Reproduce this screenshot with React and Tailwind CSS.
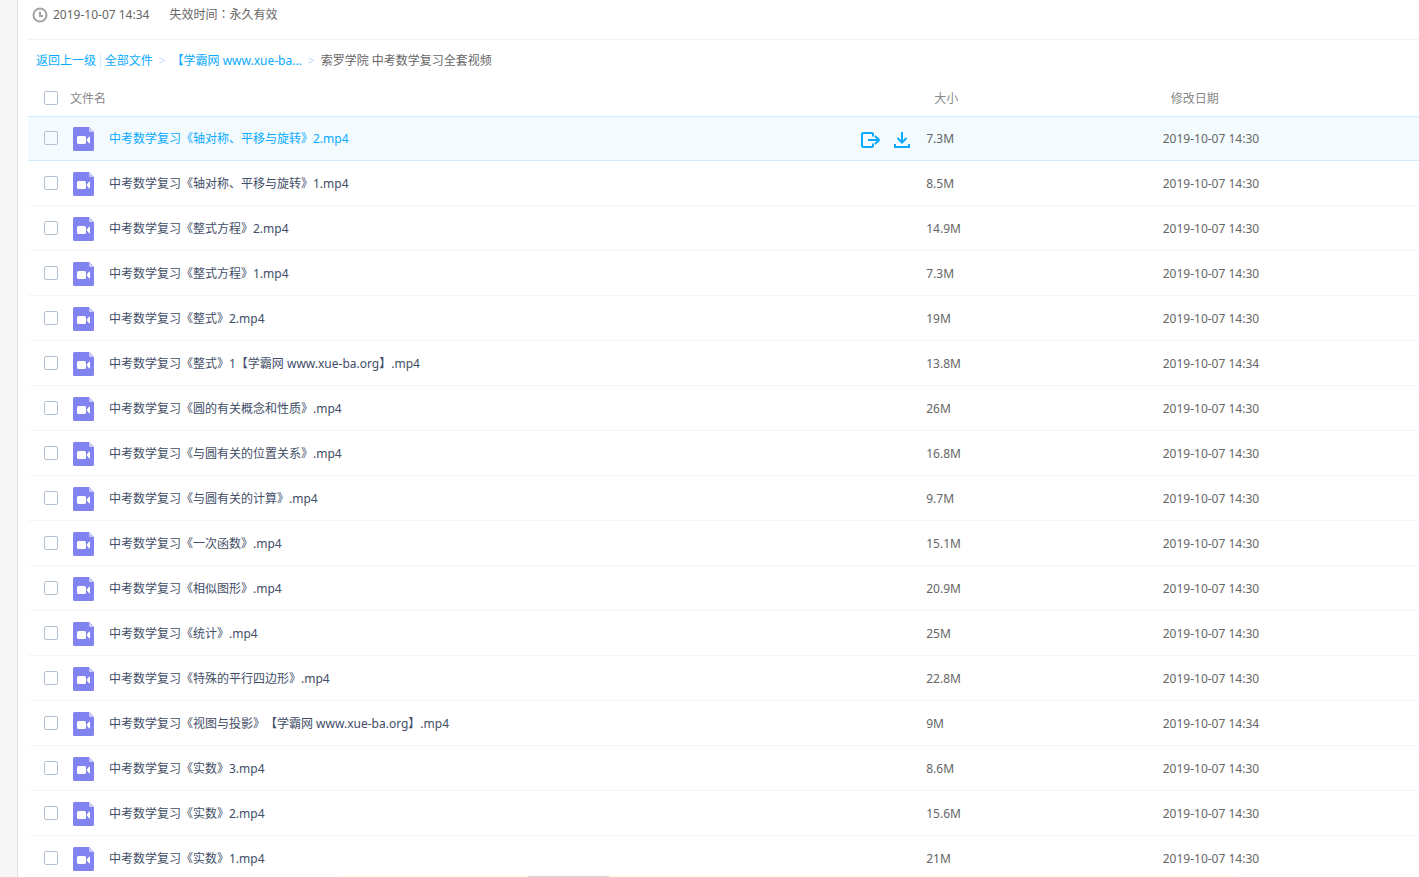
import React, { useState } from 'react';

const initialFiles = [
  { name: '中考数学复习《轴对称、平移与旋转》2.mp4', size: '7.3M', date: '2019-10-07 14:30' },
  { name: '中考数学复习《轴对称、平移与旋转》1.mp4', size: '8.5M', date: '2019-10-07 14:30' },
  { name: '中考数学复习《整式方程》2.mp4', size: '14.9M', date: '2019-10-07 14:30' },
  { name: '中考数学复习《整式方程》1.mp4', size: '7.3M', date: '2019-10-07 14:30' },
  { name: '中考数学复习《整式》2.mp4', size: '19M', date: '2019-10-07 14:30' },
  { name: '中考数学复习《整式》1【学霸网 www.xue-ba.org】.mp4', size: '13.8M', date: '2019-10-07 14:34' },
  { name: '中考数学复习《圆的有关概念和性质》.mp4', size: '26M', date: '2019-10-07 14:30' },
  { name: '中考数学复习《与圆有关的位置关系》.mp4', size: '16.8M', date: '2019-10-07 14:30' },
  { name: '中考数学复习《与圆有关的计算》.mp4', size: '9.7M', date: '2019-10-07 14:30' },
  { name: '中考数学复习《一次函数》.mp4', size: '15.1M', date: '2019-10-07 14:30' },
  { name: '中考数学复习《相似图形》.mp4', size: '20.9M', date: '2019-10-07 14:30' },
  { name: '中考数学复习《统计》.mp4', size: '25M', date: '2019-10-07 14:30' },
  { name: '中考数学复习《特殊的平行四边形》.mp4', size: '22.8M', date: '2019-10-07 14:30' },
  { name: '中考数学复习《视图与投影》【学霸网 www.xue-ba.org】.mp4', size: '9M', date: '2019-10-07 14:34' },
  { name: '中考数学复习《实数》3.mp4', size: '8.6M', date: '2019-10-07 14:30' },
  { name: '中考数学复习《实数》2.mp4', size: '15.6M', date: '2019-10-07 14:30' },
  { name: '中考数学复习《实数》1.mp4', size: '21M', date: '2019-10-07 14:30' },
];

function ClockIcon() {
  return (
    <svg className="size-4 shrink-0" viewBox="0 0 16 16" fill="none" stroke="#a3a3a3" strokeWidth="2" aria-hidden="true">
      <circle cx="8" cy="8" r="6.5" />
      <path d="M8 4.5V9h3" />
    </svg>
  );
}

function VideoFileIcon() {
  return (
    <svg className="h-6 w-[21px] shrink-0" viewBox="0 0 21 24" aria-hidden="true">
      <path d="M1.5 0H16l5 5v17.5a1.5 1.5 0 0 1-1.5 1.5h-18A1.5 1.5 0 0 1 0 22.5v-21A1.5 1.5 0 0 1 1.5 0z" fill="#8183f1" />
      <path d="M16 0l5 5h-4a1 1 0 0 1-1-1z" fill="#c9caf9" />
      <rect x="4" y="9" width="9" height="8" rx="1.5" fill="#fff" />
      <path d="M13.5 13l2.5-3.2q1-.9 1 .4v5.600q0 1.300-1 .4z" fill="#fff" />
    </svg>
  );
}

function SaveIcon() {
  return (
    <svg className="h-4 w-[19px]" viewBox="0 0 19 16" fill="none" stroke="currentColor" strokeWidth="2" aria-hidden="true">
      <path d="M12 4.5V2l-1-1H2L1 2v12l1 1h9l1-1v-2.500" />
      <path d="M7 8h10.500M14 4l4 4-4 4" />
    </svg>
  );
}

function DownloadIcon() {
  return (
    <svg className="size-4" viewBox="0 0 16 16" fill="none" stroke="currentColor" strokeWidth="2" aria-hidden="true">
      <path d="M8 0v10M3.500 6L8 10.500 12.500 6M1 12v3h14v-3" />
    </svg>
  );
}

function CheckBox({ label, checked, onChange }) {
  return (
    <input
      type="checkbox"
      aria-label={label}
      checked={checked}
      onChange={onChange}
      className="mb-0.5 size-3.5 shrink-0 appearance-none rounded-xs border border-[#b4c1d0] checked:border-[#09aaff] checked:bg-[#09aaff]"
    />
  );
}

function FileRow({ file, active, checked, onToggle }) {
  const cell = active ? 'border-y border-[#cdeaff] bg-[#f3fbff] p-0' : 'border-b border-[#f2f6fd] p-0 pt-0.5';

  return (
    <tr className="h-[45px]">
      <td className={cell}>
        <div className="flex items-center pl-4">
          <CheckBox label={file.name} checked={checked} onChange={onToggle} />
          <span className="ml-[15px] flex">
            <VideoFileIcon />
          </span>
          <a href="#file" className={active ? 'ml-[15px] text-[#09aaff]' : 'ml-[15px] text-[#424e67]'}>
            {file.name}
          </a>
          {active && (
            <div className="mt-0.5 mr-2 ml-auto flex items-center gap-3.5 text-[#09aaff]">
              <button type="button" aria-label="保存到网盘">
                <SaveIcon />
              </button>
              <button type="button" aria-label="下载">
                <DownloadIcon />
              </button>
            </div>
          )}
        </div>
      </td>
      <td className={cell}>
        <span className="pl-2">{file.size}</span>
      </td>
      <td className={cell}>
        <span className="pl-2">{file.date}</span>
      </td>
    </tr>
  );
}

export default function App() {
  const [selected, setSelected] = useState([]);
  const allSelected = selected.length === initialFiles.length;

  const toggle = (name) => {
    setSelected(selected.includes(name) ? selected.filter((n) => n !== name) : [...selected, name]);
  };

  const toggleAll = () => {
    setSelected(allSelected ? [] : initialFiles.map((f) => f.name));
  };

  return (
    <div className="flex h-screen overflow-hidden bg-[#f7f7f7] font-['Noto_Sans','Noto_Sans_CJK_SC',sans-serif] text-xs text-[#666] [text-spacing-trim:space-all]">
      <main className="ml-[17px] min-w-0 flex-1 border-l border-[#e2e2e2] bg-white pl-2.5">
        <div className="flex h-10 items-start gap-5 border-b border-[#f2f2f2] pt-[7px] pl-1">
          <div className="flex items-center gap-[5px]">
            <ClockIcon />
            <span>2019-10-07 14:34</span>
          </div>
          <span className="font-['Noto_Sans','Noto_Sans_CJK_TC',sans-serif]">失效时间：永久有效</span>
        </div>

        <nav className="flex h-10 items-center pt-0.5 pl-2 text-[#09aaff]">
          <a href="#back">返回上一级</a>
          <span className="px-px text-[#c3eaff]">|</span>
          <a href="#all">全部文件</a>
          <span className="px-1.5 text-[#c4dbfe]">&gt;</span>
          <a href="#folder">【学霸网 www.xue-ba...</a>
          <span className="px-1.5 text-[#c4dbfe]">&gt;</span>
          <span className="text-[#666]">索罗学院 中考数学复习全套视频</span>
        </nav>

        <table className="w-full table-fixed border-separate border-spacing-0 text-left">
          <colgroup>
            <col className="w-[64%]" />
            <col className="w-[17%]" />
            <col className="w-[19%]" />
          </colgroup>
          <thead>
            <tr className="h-9 text-[#888]">
              <th className="p-0 pt-0.5 font-normal">
                <div className="flex items-center gap-3 pl-4">
                  <CheckBox label="全选" checked={allSelected} onChange={toggleAll} />
                  <span>文件名</span>
                </div>
              </th>
              <th className="p-0 pt-0.5 pl-4 font-normal">大小</th>
              <th className="p-0 pt-0.5 pl-4 font-normal">修改日期</th>
            </tr>
          </thead>
          <tbody>
            {initialFiles.map((file, i) => (
              <FileRow
                key={file.name}
                file={file}
                active={i === 0}
                checked={selected.includes(file.name)}
                onToggle={() => toggle(file.name)}
              />
            ))}
          </tbody>
        </table>
      </main>

      {/* top edge of the notice bar docked below the list */}
      <div className="fixed right-[13%] bottom-0 left-[24%] flex h-0.5 items-end bg-[#fffff0]">
        <div className="ml-[21%] h-px w-[9%] bg-[#d6d6e4]" />
      </div>
    </div>
  );
}
